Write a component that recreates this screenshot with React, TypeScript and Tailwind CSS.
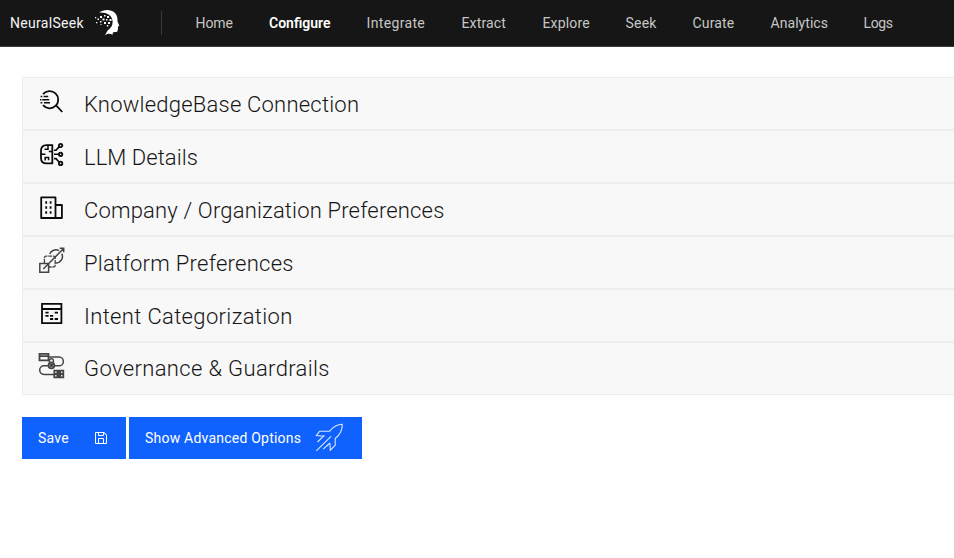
import type { ReactNode } from "react";

const nav = [
  { label: "Home", box: "w-[73px]", text: "tracking-[-0.05px]" },
  { label: "Configure", box: "w-[98px]", text: "font-semibold text-white pl-[0.5px]" },
  { label: "Integrate", box: "w-[95px]", text: "tracking-[0.35px]" },
  { label: "Extract", box: "w-[81px]", text: "tracking-[0.15px]" },
  { label: "Explore", box: "w-[83px]", text: "tracking-[0.15px]" },
  { label: "Seek", box: "w-[67px]", text: "tracking-[0.2px]" },
  { label: "Curate", box: "w-[78px]", text: "tracking-[0.15px]" },
  { label: "Analytics", box: "w-[93px]", text: "tracking-[0.05px]" },
  { label: "Logs", box: "w-[60px]", text: "tracking-[-0.4px]" },
];

function Icon({ children, color = "#0a0a0a" }: { children: ReactNode; color?: string }) {
  return (
    <svg width="28" height="28" viewBox="0 0 28 28" fill="none" stroke={color} strokeWidth="1.8" className="shrink-0">
      {children}
    </svg>
  );
}

const SearchIcon = (
  <Icon>
    <path d="M5 6.2A8.6 8.6 0 1 1 5 17.2M18.5 17.8l5.8 6.2" />
    <path d="M2.6 8.6h1.7M5.6 8.6h4.6M2 11.7h1.4M4.2 11.7h7M2.6 14.8h1.7M6 14.8h6" strokeWidth="1.5" />
  </Icon>
);
const BrainIcon = (
  <Icon>
    <path d="M14.3 3.5v19.6M14.8 4.2H8.6Q3 4.4 3 9.6V17Q3 22.4 8.6 22.4h6.2" />
    <path d="M3 13.3h4.4M10 4.5v3.8H6.6M14 10.5h-3.2M7.2 19.4v-2.8h3.4v2.6" strokeWidth="1.5" />
    <path d="M16 9.2h2l3-3.3M16 13.3h4.7M16 17.6h2l3 3.4" strokeWidth="1.6" />
    <circle cx="22.6" cy="4.5" r="1.7" />
    <circle cx="22.6" cy="13.3" r="1.7" />
    <circle cx="22.6" cy="22.4" r="1.7" />
  </Icon>
);
const BuildingIcon = (
  <Icon>
    <path d="M17.5 24H3.2V3.4h14.3V24h6.4V11h-6.4" strokeLinejoin="round" />
    <path d="M8.2 7.2v2.6M12.6 7.2v2.6M8.2 12.2v2.6M12.6 12.2v2.6M8.2 17.2v2.6M12.6 17.2v2.6" />
  </Icon>
);
const PlatformIcon = (
  <Icon color="#444">
    <path d="M1.8 16.5h8.8v8.8H1.8zM5.3 22L25.8 1.3M21.7 1.3h4v4" strokeWidth="1.5" />
    <path d="M11.7 7A6.6 6.6 0 0 1 21 3.7M23.8 6.6A6.6 6.6 0 0 1 18 16" strokeWidth="1.5" />
    <path d="M6.4 16V11q0-1.8 1.8-1.8h7.2q1.8 0 1.8 1.8v7.2q0 1.8-1.8 1.8H11" strokeWidth="1.3" strokeDasharray="4 .8" />
  </Icon>
);
const CategoryIcon = (
  <Icon>
    <path d="M4 3.8h19.4v19.4H4zM4 9h19.4" />
    <path d="M7.4 12.7h3.2M16.7 12.7H20M7.4 15.8h3.2M12 15.8h3.2M12 19h3.2M16.7 19H20" />
  </Icon>
);
const GovernanceIcon = (
  <Icon color="#444">
    <path d="M1.5 .9h9v6.4h-9zM1.5 3.2h9" />
    <path d="M10.5 4H21a4.4 4.4 0 0 1 0 8.8h-4M10 12.8H6a4.3 4.3 0 0 0 0 8.6h10" strokeWidth="1.5" />
    <path d="M11.4 9V7.8a2 2 0 0 1 4 0V9" strokeWidth="1.4" />
    <circle cx="13.4" cy="12.4" r="2.9" />
    <circle cx="13.4" cy="12.4" r=".9" />
    <path d="M16.3 17.7h9v6.6h-9zM16.3 21h9M18.5 19.4h4.6M18.5 22.7h4.6" />
  </Icon>
);

const sections = [
  { label: "KnowledgeBase Connection", icon: SearchIcon, text: "tracking-[0.22px] mt-[1px]" },
  { label: "LLM Details", icon: BrainIcon, text: "tracking-[0.05px] mt-[1px]" },
  { label: "Company / Organization Preferences", icon: BuildingIcon, text: "tracking-[0.17px] mt-[1px]" },
  { label: "Platform Preferences", icon: PlatformIcon, text: "tracking-[0.27px] mt-[1px]" },
  { label: "Intent Categorization", icon: CategoryIcon, text: "tracking-[0.35px] mt-[1px]" },
  { label: "Governance & Guardrails", icon: GovernanceIcon, text: "tracking-[0.36px]" },
];

function HeadLogo() {
  return (
    <svg width="27" height="28" viewBox="0 0 27 28" fill="#fff" className="ml-[9px]">
      <path d="M5 3.6C9.500.5 16.500-.2 21 4c2.500 2.800 2.600 6 2.500 8.400l1.800 4.300-1.400 1 .1 2.400-.8 2.600c-1.500.6-3.300.1-4.200.7-.7.700-.2 1.600-.2 2.400C16 24.400 13 24.200 10.800 26.600L13.600 21.500c3-2.200 5.200-4.700 5-9C18.300 6 12 3 5 3.600Z" />
      <path d="M6 7h2v2H6zM10 6h1.500v1.500H10zM13 7h2v2h-2zM3.500 9.500H5V11H3.500zM8.500 9.500h2v2h-2zM12 10h1.500v1.500H12zM15.500 10h2v2h-2zM1 8h1.200v1.200H1zM2 13h1.300v1.300H2zM6 12h1.500v1.500H6zM10 13h2v2h-2zM14 13h2v2h-2zM12.800 16h1.500v1.500h-1.500zM6.500 15h1v1h-1z" />
    </svg>
  );
}

export default function App() {
  return (
    <div className="h-[558px] w-[954px] overflow-hidden bg-white font-['Roboto',sans-serif] text-[14px]">
      <header className="flex h-[47px] items-center border-b border-[#393939] bg-[#161616] text-[#c6c6c6]">
        <div className="flex h-6 w-[162px] items-center whitespace-nowrap border-r border-[#393939] pl-[10px] text-[#f4f4f4]">
          <span className="w-[75px] tracking-[0.3px]">NeuralSeek</span>
          <HeadLogo />
        </div>
        <nav className="flex pl-[33.5px]">
          {nav.map((n) => (
            <a key={n.label} className={`whitespace-nowrap ${n.box} ${n.text}`}>{n.label}</a>
          ))}
        </nav>
      </header>
      <main className="pl-[22px] pt-[30px]">
        <div className="border-y border-l border-[#eeeeee] bg-[#f8f8f8]">
          {sections.map((s) => (
            <div key={s.label} className="flex h-[53px] items-start border-b-2 border-[#eeeeee] pl-[15px] pt-[10px] last:h-[51px] last:border-b-0">
              {s.icon}
              <h2 className={`ml-[18px] whitespace-nowrap text-[22px] leading-[32px] font-light text-[#161616] ${s.text}`}>{s.label}</h2>
            </div>
          ))}
        </div>
        <div className="mt-[22px] flex gap-[3px] text-white">
          <button className="flex h-[42px] w-[104px] items-center justify-between bg-[#0f62fe] pl-4 pr-[17px]">
            <span className="tracking-[0.25px]">Save</span>
            <svg width="16" height="16" viewBox="0 0 32 32" fill="currentColor">
              <path d="M27.71,9.29l-5-5A1,1,0,0,0,22,4H6A2,2,0,0,0,4,6V26a2,2,0,0,0,2,2H26a2,2,0,0,0,2-2V10A1,1,0,0,0,27.71,9.29ZM12,6h8v4H12Zm8,20H12V18h8Zm2,0V18a2,2,0,0,0-2-2H12a2,2,0,0,0-2,2v8H6V6h4v4a2,2,0,0,0,2,2h8a2,2,0,0,0,2-2V6.41l4,4V26Z" />
            </svg>
          </button>
          <button className="flex h-[42px] w-[233px] items-center justify-between bg-[#0f62fe] pl-4 pr-[18px]">
            <span className="whitespace-nowrap tracking-[0.22px]">Show Advanced Options</span>
            <svg width="30" height="30" viewBox="0 0 30 30" fill="none" stroke="#dbe7ff" strokeWidth="1.1">
              <path d="M10.3 13.2L2.4 12.6 5.5 8.3H15.5C19 4 23 1.2 28.2 1.2 28.6 7 25.5 12 21.2 15.5V22.3L16.3 27.2 15.8 20" />
              <path d="M10.3 12.3L3.5 19M17 13.3L2.3 27.8M16 20l-6.8 6.2" />
            </svg>
          </button>
        </div>
      </main>
    </div>
  );
}
